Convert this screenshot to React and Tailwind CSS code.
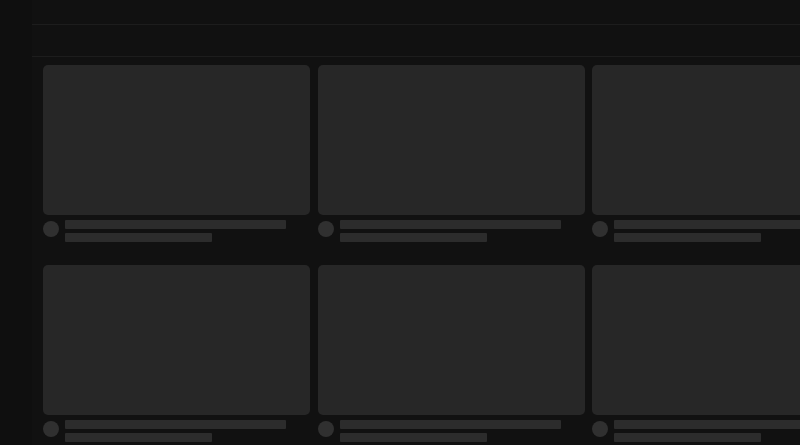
import React from 'react';

function SkeletonCard() {
  return (
    <div className="flex flex-col">
      <div className="h-[150px] w-full rounded-[5px] bg-[#272727]" />
      <div className="flex gap-[6px] pt-[5px]">
        <div className="mt-[1px] h-[16px] w-[16px] shrink-0 rounded-full bg-[#303030]" />
        <div className="flex flex-col gap-[4px]">
          <div className="h-[9px] w-[221px] rounded-[1px] bg-[#2c2c2c]" />
          <div className="h-[9px] w-[147px] rounded-[1px] bg-[#2c2c2c]" />
        </div>
      </div>
    </div>
  );
}

export default function App() {
  const cards = [1, 2, 3, 4, 5, 6];

  return (
    <div className="flex h-[445px] w-[800px] overflow-hidden bg-[#0f0f0f]">
      {/* Sidebar */}
      <div className="w-[32px] shrink-0 bg-[#0f0f0f]" />

      <div className="flex min-w-0 flex-1 flex-col bg-[#111111]">
        {/* Top bar */}
        <div className="h-[25px] shrink-0 border-b border-[#1d1d1d]" />
        {/* Chips bar */}
        <div className="h-[32px] shrink-0 border-b border-[#1d1d1d]" />

        {/* Video grid */}
        <div className="grid grid-cols-[repeat(3,267px)] gap-x-[7.5px] gap-y-[23px] pl-[11px] pt-[8px]">
          {cards.map((c) => (
            <SkeletonCard key={c} />
          ))}
        </div>
      </div>
    </div>
  );
}
